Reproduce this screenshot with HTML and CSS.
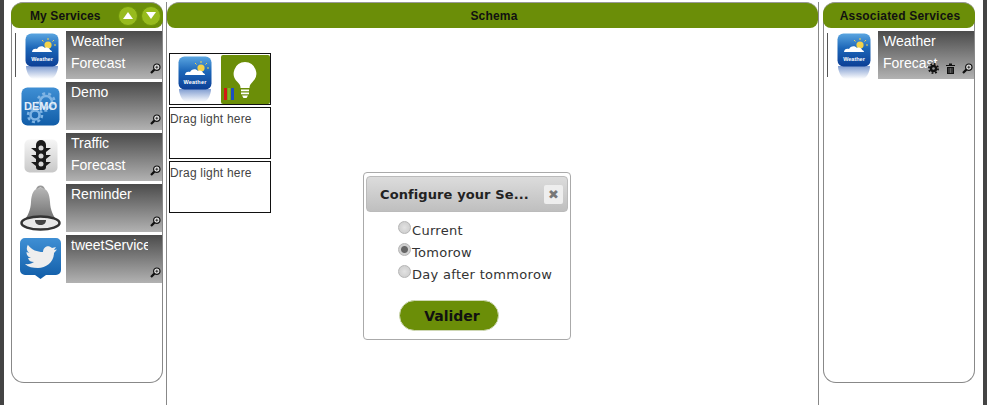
FILE: index.html
```html
<!DOCTYPE html>
<html lang="en">
<head>
    <meta charset="UTF-8">
    <title>Services</title>
    <link rel="stylesheet" href="styles.css">
</head>
<body>
    <svg class="sprites" width="0" height="0">
        <defs>
            <linearGradient id="blueTile" x1="0" y1="0" x2="0" y2="1">
                <stop offset="0" stop-color="#5aa5e0"/>
                <stop offset="0.45" stop-color="#1c66b8"/>
                <stop offset="1" stop-color="#0c3f96"/>
            </linearGradient>
            <linearGradient id="reflect" x1="0" y1="0" x2="0" y2="1">
                <stop offset="0" stop-color="#7f9cd0"/>
                <stop offset="1" stop-color="#ffffff"/>
            </linearGradient>
            <linearGradient id="demoTile" x1="0" y1="0" x2="0" y2="1">
                <stop offset="0" stop-color="#3f8fd4"/>
                <stop offset="1" stop-color="#115da8"/>
            </linearGradient>
            <linearGradient id="greyTile" x1="0" y1="0" x2="0" y2="1">
                <stop offset="0" stop-color="#f6f6f6"/>
                <stop offset="1" stop-color="#c8c8c8"/>
            </linearGradient>
            <linearGradient id="bellFill" x1="0" y1="0" x2="0" y2="1">
                <stop offset="0" stop-color="#b5b5b5"/>
                <stop offset="1" stop-color="#6a6a6a"/>
            </linearGradient>
            <symbol id="weather" viewBox="0 0 34 46">
                <path d="M1 33h32c0 5-3 12-7 13H8c-4-1-7-8-7-13z" fill="url(#reflect)"/>
                <rect x="0.500" y="0.500" width="33" height="33" rx="6" fill="url(#blueTile)"/>
                <circle cx="23" cy="12" r="3.600" fill="#f3d34a"/>
                <path d="M23 5v2M29 7l-1.500 1.500M31 12h-2M17 7l1.500 1.500" stroke="#f3d34a" fill="none"/>
                <path d="M7 19c0-3 3-4 5-3 1-3 6-4 8-1 2-1 5 0 5 2 1 0 2 1 2 2z" fill="#fff"/>
                <text x="17" y="28" class="tile-label">Weather</text>
            </symbol>
            <symbol id="demo" viewBox="0 0 39 40">
                <rect x="0.500" y="0.500" width="38" height="38" rx="6" fill="url(#demoTile)"/>
                <circle cx="25" cy="15" r="6" fill="none" stroke="#7fb4e4" stroke-width="2.500"/>
                <circle cx="25" cy="15" r="8.500" fill="none" stroke="#7fb4e4" stroke-width="2.500" stroke-dasharray="3 3"/>
                <circle cx="14" cy="28" r="4.500" fill="none" stroke="#7fb4e4" stroke-width="2.500"/>
                <circle cx="14" cy="28" r="7" fill="none" stroke="#7fb4e4" stroke-width="2.500" stroke-dasharray="3 2.500"/>
                <text x="19.500" y="23" class="demo-label">DEMO</text>
            </symbol>
            <symbol id="traffic" viewBox="0 0 34 34">
                <rect x="0.500" y="0.500" width="33" height="33" rx="5" fill="url(#greyTile)"/>
                <path d="M12 6a5 5 0 0 1 10 0v22a3 3 0 0 1-3 3h-4a3 3 0 0 1-3-3z" fill="#1a1a1a"/>
                <path d="M7 9h5v4zM27 9h-5v4zM7 16h5v4zM27 16h-5v4zM7 23h5v4zM27 23h-5v4z" fill="#1a1a1a"/>
                <circle cx="17" cy="9" r="2.500" fill="#d8d8d8"/>
                <circle cx="17" cy="17" r="2.500" fill="#d8d8d8"/>
                <circle cx="17" cy="25" r="2.500" fill="#d8d8d8"/>
            </symbol>
            <symbol id="bell" viewBox="0 0 41 46">
                <path d="M17 5a3.500 3.500 0 0 1 7 0" fill="none" stroke="#999" stroke-width="2"/>
                <path d="M20.500 3c7 0 9 6 9.500 14 .4 8 3 14 8 20H3c5-6 7.600-12 8-20 .5-8 2.500-14 9.500-14z" fill="url(#bellFill)"/>
                <ellipse cx="20.500" cy="38" rx="19" ry="6.500" fill="#e8e8e8" stroke="#333" stroke-width="2.500"/>
                <path d="M15 35h11c0 3-2 5-5.500 5S15 38 15 35z" fill="#444"/>
            </symbol>
            <symbol id="twitter" viewBox="0 0 41 41">
                <path d="M5 0h31a5 5 0 0 1 5 5v27a5 5 0 0 1-5 5H26l-5.500 4-5.500-4H5a5 5 0 0 1-5-5V5a5 5 0 0 1 5-5z" fill="url(#demoTile)"/>
                <path d="M8 7c4 5 9 7 15 7 0-5 5-8 9-4l4-1-2 3 3-.5-3 3.500c0 9-8 15-16 15-5 0-10-1-13-4 4 .5 7-.5 9-2-3 0-5-1-6-4h3c-3-1-4.500-3-4.500-6l3 1c-3-2-3.500-5-1.500-8.500z" fill="#eeeeee"/>
            </symbol>
            <symbol id="lookup" viewBox="0 0 11 11">
                <circle cx="6.800" cy="4.200" r="3.200" fill="#e8e8e8" stroke="#111" stroke-width="1.200"/>
                <path d="M5.300 4.200h3M6.800 2.700v3" stroke="#111" stroke-width=".8"/>
                <path d="M4.400 6.600 1 10" stroke="#111" stroke-width="2.200"/>
            </symbol>
            <symbol id="gear" viewBox="0 0 11 11">
                <circle cx="5.500" cy="5.500" r="3.800" fill="#111"/>
                <circle cx="5.500" cy="5.500" r="4.600" fill="none" stroke="#111" stroke-width="1.800" stroke-dasharray="1.800 1.800"/>
                <circle cx="5.500" cy="5.500" r="1.300" fill="#999"/>
            </symbol>
            <symbol id="trash" viewBox="0 0 11 11">
                <path d="M1 2h9v1H1zM4 .500h3V2H4z" fill="#111"/>
                <path d="M2 4h7v7H2z" fill="#111"/>
                <path d="M4 5v5M5.500 5v5M7 5v5" stroke="#999" stroke-width=".6"/>
            </symbol>
        </defs>
    </svg>

    <div class="page">
        <section class="panel">
            <div class="panel-head">
                <h2 class="panel-title panel-title-left">My Services</h2>
                <button class="round-btn" type="button"><span class="arrow-up"></span></button>
                <button class="round-btn" type="button"><span class="arrow-down"></span></button>
            </div>
            <ul class="service-list">
                <li class="service service-first">
                    <div class="service-icon"><svg class="icon-weather"><use href="#weather"/></svg></div>
                    <div class="service-tile">
                        <div class="service-name">Weather Forecast</div>
                        <div class="tile-tools"><svg class="tool"><use href="#lookup"/></svg></div>
                    </div>
                </li>
                <li class="service">
                    <div class="service-icon"><svg class="icon-demo"><use href="#demo"/></svg></div>
                    <div class="service-tile">
                        <div class="service-name">Demo</div>
                        <div class="tile-tools"><svg class="tool"><use href="#lookup"/></svg></div>
                    </div>
                </li>
                <li class="service">
                    <div class="service-icon"><svg class="icon-traffic"><use href="#traffic"/></svg></div>
                    <div class="service-tile">
                        <div class="service-name">Traffic Forecast</div>
                        <div class="tile-tools"><svg class="tool"><use href="#lookup"/></svg></div>
                    </div>
                </li>
                <li class="service">
                    <div class="service-icon"><svg class="icon-bell"><use href="#bell"/></svg></div>
                    <div class="service-tile">
                        <div class="service-name">Reminder</div>
                        <div class="tile-tools"><svg class="tool"><use href="#lookup"/></svg></div>
                    </div>
                </li>
                <li class="service">
                    <div class="service-icon"><svg class="icon-twitter"><use href="#twitter"/></svg></div>
                    <div class="service-tile">
                        <div class="service-name">tweetService</div>
                        <div class="tile-tools"><svg class="tool"><use href="#lookup"/></svg></div>
                    </div>
                </li>
            </ul>
        </section>

        <section class="schema">
            <div class="panel-head schema-head">
                <h2 class="panel-title">Schema</h2>
            </div>
            <div class="schema-cells">
                <div class="schema-cell schema-cell-filled">
                    <svg class="icon-schema"><use href="#weather"/></svg>
                    <div class="light-box">
                        <svg class="light" viewBox="0 0 49 49">
                            <path d="M24 7a11.500 11.500 0 0 0-7.500 20c2 2 3 3.500 3 6h9c0-2.500 1-4 3-6A11.500 11.500 0 0 0 24 7z" fill="#fff"/>
                            <path d="M20 34.500h8v1.800h-8zM20 37.500h8v1.800h-8zM21 40.500h6l-1.500 2.500h-3z" fill="#fff"/>
                            <rect x="3" y="33" width="3" height="12" fill="#d21a12"/>
                            <rect x="6.500" y="33" width="3" height="12" fill="#7fb52a"/>
                            <rect x="10" y="33" width="3" height="12" fill="#1c4fc0"/>
                        </svg>
                    </div>
                </div>
                <div class="schema-cell">Drag light here</div>
                <div class="schema-cell">Drag light here</div>
            </div>
        </section>

        <section class="panel">
            <div class="panel-head assoc-head">
                <h2 class="panel-title">Associated Services</h2>
            </div>
            <ul class="service-list">
                <li class="service service-first">
                    <div class="service-icon"><svg class="icon-weather"><use href="#weather"/></svg></div>
                    <div class="service-tile">
                        <div class="service-name">Weather Forecast</div>
                        <div class="tile-tools">
                            <svg class="tool"><use href="#gear"/></svg>
                            <svg class="tool"><use href="#trash"/></svg>
                            <svg class="tool"><use href="#lookup"/></svg>
                        </div>
                    </div>
                </li>
            </ul>
        </section>
    </div>

    <form class="dialog">
        <div class="dialog-head">
            <span class="dialog-title">Configure your Se...</span>
            <span class="dialog-close">✖</span>
        </div>
        <div class="dialog-body">
            <label class="choice"><input type="radio" name="day">Current</label>
            <label class="choice"><input type="radio" name="day" checked>Tomorow</label>
            <label class="choice"><input type="radio" name="day">Day after tommorow</label>
            <button class="valider" type="button">Valider</button>
        </div>
    </form>
</body>
</html>
```

FILE: styles.css
```css
html, body {
    height: 100%;
}

body {
    margin: 0;
    background-color: #fff;
    border-left: 4px solid #444;
    border-right: 4px solid #444;
    box-sizing: border-box;
    overflow: hidden;
    font-family: "Liberation Sans", Arial, sans-serif;
    position: relative;
}

.sprites {
    position: absolute;
}

.tile-label {
    font: bold 5.500px "Liberation Sans", Arial, sans-serif;
    fill: #fff;
    text-anchor: middle;
}

.demo-label {
    font: bold 11px "Liberation Sans", Arial, sans-serif;
    fill: #e4eef8;
    text-anchor: middle;
}

.page {
    display: flex;
    height: 100%;
    box-sizing: border-box;
    padding: 2px 8px 0 7px;
    gap: 3px;
}

/* side panels */
.panel {
    flex: 0 0 152px;
    height: 381px;
    box-sizing: border-box;
    border: 1px solid #888;
    border-top: 0;
    border-radius: 13px;
}

.panel-head {
    display: flex;
    align-items: center;
    height: 26px;
    box-sizing: border-box;
    margin: 0 -1px;
    padding: 0 2px 0 0;
    background-color: #6b8e08;
    border-top: 1px solid #999;
    border-radius: 12px 12px 8px 8px;
    gap: 3px;
}

.schema-head {
    margin: 0;
    padding-left: 5px;
}

.assoc-head {
    padding-left: 4px;
}

.panel-title {
    flex: 1;
    margin: 0;
    font-size: 12px;
    font-weight: bold;
    letter-spacing: 0.2px;
    text-align: center;
    color: #111;
}

.panel-title-left {
    text-align: left;
    padding-left: 19px;
    letter-spacing: 0.1px;
}

.round-btn {
    width: 20px;
    height: 20px;
    padding: 0;
    border: 1px solid #6f9409;
    border-radius: 50%;
    background-color: #97bb1d;
    display: flex;
    align-items: center;
    justify-content: center;
}

.arrow-up {
    border-left: 5px solid transparent;
    border-right: 5px solid transparent;
    border-bottom: 7px solid #fff;
}

.arrow-down {
    border-left: 5px solid transparent;
    border-right: 5px solid transparent;
    border-top: 7px solid #fff;
}

.service-list {
    list-style: none;
    margin: 0;
    padding: 3px 0 0;
    display: flex;
    flex-direction: column;
    gap: 3px;
}

.service {
    display: flex;
    height: 48px;
}

.service-first {
    position: relative;
}

/* thin dark rule next to the first icon */
.service-first::before {
    content: "";
    position: absolute;
    left: 3px;
    top: 2px;
    bottom: 2px;
    width: 1px;
    background-color: #555;
}

.service-icon {
    flex: 0 0 54px;
    display: flex;
    justify-content: center;
    align-items: flex-start;
}

.icon-weather {
    width: 34px;
    height: 46px;
    margin: 2px 0 0 6px;
}

.icon-demo {
    width: 39px;
    height: 40px;
    margin: 5px 0 0 2px;
}

.icon-traffic {
    width: 34px;
    height: 34px;
    margin: 6px 0 0 4px;
}

.icon-bell {
    width: 41px;
    height: 46px;
    margin: 1px 0 0 2px;
}

.icon-twitter {
    width: 41px;
    height: 41px;
    margin: 3px 0 0 2px;
}

.service-tile {
    flex: 1;
    position: relative;
    background: linear-gradient(#4b4b4b, #b2b2b2);
}

.service-name {
    width: 77px;
    height: 48px;
    margin-left: 5px;
    overflow: hidden;
    font-size: 14px;
    line-height: 22px;
    color: #fff;
    position: relative;
    top: -1px;
}

.tile-tools {
    position: absolute;
    right: 1px;
    bottom: 5px;
    display: flex;
    gap: 6px;
}

.tool {
    width: 11px;
    height: 11px;
    display: block;
}

/* middle column */
.schema {
    flex: 1;
    border-left: 1px solid #888;
    border-right: 1px solid #888;
    margin-right: 1px;
}

.schema-cells {
    display: flex;
    flex-direction: column;
    gap: 2px;
    padding: 25px 0 0 2px;
}

.schema-cell {
    width: 102px;
    height: 52px;
    box-sizing: border-box;
    border: 1px solid #111;
    font-size: 12px;
    letter-spacing: 0.2px;
    line-height: 22px;
    color: #444;
}

.schema-cell-filled {
    display: flex;
    justify-content: space-between;
    align-items: flex-start;
    padding: 1px 0 0 8px;
}

.icon-schema {
    width: 34px;
    height: 46px;
    margin-top: 1px;
}

.light-box {
    width: 49px;
    height: 49px;
    background-color: #6b8e08;
    border-radius: 2px;
}

.light {
    display: block;
    width: 49px;
    height: 49px;
}

/* popup */
.dialog {
    position: absolute;
    left: 359px;
    top: 172px;
    width: 208px;
    height: 168px;
    box-sizing: border-box;
    background-color: #fff;
    border: 1px solid #aaa;
    border-radius: 4px;
    padding: 3px 2px;
    font-family: "DejaVu Sans", Verdana, sans-serif;
}

.dialog-head {
    display: flex;
    align-items: center;
    justify-content: space-between;
    height: 36px;
    box-sizing: border-box;
    padding: 0 4px 0 13px;
    border: 1px solid #bbb;
    border-radius: 4px;
    background: linear-gradient(#dcdcdc, #bfbfbf);
}

.dialog-title {
    font-size: 13px;
    font-weight: bold;
    letter-spacing: 0.1px;
    color: #222;
}

.dialog-close {
    width: 19px;
    height: 19px;
    display: flex;
    align-items: center;
    justify-content: center;
    background-color: #eee;
    border-radius: 2px;
    font-size: 13px;
    color: #777;
}

.dialog-body {
    padding: 7px 0 0 33px;
}

.choice {
    display: flex;
    align-items: center;
    height: 22px;
    font-size: 13px;
    letter-spacing: 0.3px;
    color: #333;
}

.choice input {
    appearance: none;
    width: 13px;
    height: 13px;
    margin: -5px 1px 0 -1px;
    border: 1px solid #b5b5b5;
    border-radius: 50%;
    background: radial-gradient(circle, #e2e2e2, #c9c9c9);
}

.choice input:checked {
    background: radial-gradient(circle, #666 0, #666 3px, #d0d0d0 4px);
}

.valider {
    display: block;
    width: 100px;
    height: 31px;
    margin-top: 15px;
    padding-left: 12px;
    border: 1px solid #cfd8b5;
    border-radius: 16px;
    background-color: #6b8e08;
    font-family: "DejaVu Sans", Verdana, sans-serif;
    font-size: 14px;
    font-weight: bold;
    color: #111;
}
```
